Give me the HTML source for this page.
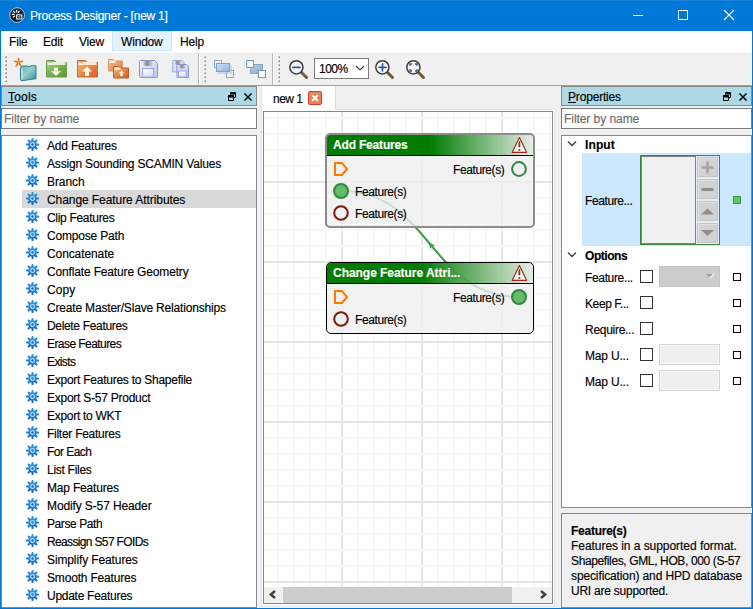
<!DOCTYPE html>
<html><head><meta charset="utf-8">
<style>
*{box-sizing:border-box;margin:0;padding:0}
html,body{width:753px;height:609px;overflow:hidden;background:#f0f0f0;font-family:"Liberation Sans",sans-serif;font-size:12px;letter-spacing:-0.18px;color:#000;-webkit-text-stroke:0.15px currentColor}
.a{position:absolute}
#title{left:0;top:0;width:753px;height:31px;background:#0078d7}
#title .t{left:30px;top:9px;color:#fff;font-size:12px;letter-spacing:-0.25px;white-space:nowrap}
#lb{left:0;top:0;width:1px;height:609px;background:#0078d7;z-index:50}
#rb{left:752px;top:0;width:1px;height:609px;background:#0078d7;z-index:50}
#bb{left:0;top:608px;width:753px;height:1px;background:#0078d7;z-index:50}
#menu{left:0;top:31px;width:753px;height:21px;background:#fff}
.mi{position:absolute;top:4px;white-space:nowrap}
#mhl{left:112px;top:31px;width:60px;height:20px;background:#e5f3ff;border:1px solid #cce8ff}
#tb{left:0;top:52px;width:753px;height:34px;background:#f0f0f0;border-top:1px solid #f7f7f7;border-bottom:1px solid #a0a0a0}
.grip{position:absolute;width:2px;height:2px;background:linear-gradient(135deg,#d8d8d8 45%,#8c8c8c 55%);box-shadow:-1px -1px 0 #fafafa}
.sep{position:absolute;top:53px;width:1px;height:32px;background:#b4b4b4;box-shadow:1px 0 0 #fff}
.hdr{height:20px;background:#add8e6;border:1px solid #8a8a8a;white-space:nowrap}
.hdr .ht{position:absolute;left:6px;top:3px;font-size:12px}
.filt{height:21px;background:#fff;border:1px solid #7a7a7a}
.filt span{position:absolute;left:2px;top:3px;color:#6d6d6d;font-size:12px;letter-spacing:-0.06px}
#list{left:1px;top:135px;width:256px;height:473px;background:#fff;border:1px solid #828790;overflow:hidden}
.row{position:absolute;left:0;width:255px;height:18px}
.row.sel{background:transparent}
.row .gear{position:absolute;left:23.9px;top:1.3px}
.row .lt{position:absolute;left:46px;top:3px;white-space:nowrap}
#selbg{left:22px;top:190px;width:234px;height:18px;background:#d9d9d9}
#canvas{left:263px;top:111px;width:290px;height:493px;background:#fff;border:1px solid #828790;overflow:hidden}
.gv{position:absolute;top:112px;width:2px;height:475px;background:#f7f7f7}
.gh{position:absolute;left:264px;width:288px;height:2px;background:#f7f7f7}
.node{position:absolute;border-radius:5px;overflow:hidden}
.nh{position:absolute;left:0;right:0;height:21px;color:#fff;font-weight:bold;font-size:12px;white-space:nowrap}
.pl{position:absolute;white-space:nowrap;font-size:12px;letter-spacing:-0.4px}
</style></head><body>
<svg width="0" height="0" style="position:absolute"><defs><linearGradient id="gearg" x1="0" y1="0" x2="0" y2="1"><stop offset="0" stop-color="#2a94e2"/><stop offset="1" stop-color="#0b66c6"/></linearGradient></defs></svg><div id="lb" class="a"></div><div id="rb" class="a"></div><div id="bb" class="a"></div>

<!-- title bar -->
<div id="title" class="a"><div class="a" style="left:0;top:0;width:753px;height:1px;background:#1c84da"></div>
  <svg class="a" style="left:8px;top:6px" width="18" height="18" viewBox="0 0 18 18">
    <defs><linearGradient id="ic" x1="0" y1="0" x2="0" y2="1"><stop offset="0" stop-color="#24344e"/><stop offset="1" stop-color="#0a1628"/></linearGradient></defs>
    <circle cx="9.1" cy="9.05" r="7.4" fill="url(#ic)" stroke="#b4cce6" stroke-width="0.9"/>
    <rect x="8.6" y="8.9" width="5.2" height="4.1" fill="none" stroke="#e4e8ee" stroke-width="1.1"/>
    <rect x="9.9" y="10.4" width="2.3" height="1" fill="#d8dce4"/>
    <g stroke="#f4f6f8" stroke-width="1.3" stroke-linecap="round"><path d="M8.6 4.3v1.4M11 5.5l-0.8 0.8M5.7 5.5l0.9 0.9M4.5 8.4h1.5M5.5 10.8l1-0.6"/></g>
  </svg>
  <span class="a t">Process Designer - [new 1]</span>
  <div class="a" style="left:633px;top:15px;width:10px;height:1px;background:#fff"></div>
  <div class="a" style="left:678px;top:10px;width:10px;height:10px;border:1px solid #fff"></div>
  <svg class="a" style="left:723px;top:9px" width="12" height="12" viewBox="0 0 12 12"><path d="M1 1L11 11M11 1L1 11" stroke="#fff" stroke-width="1.1"/></svg>
</div>

<!-- menu -->
<div id="menu" class="a"></div>
<div id="mhl" class="a"></div>
<div class="a" style="left:0;top:31px;width:753px;height:21px">
  <span class="mi" style="left:9px">File</span>
  <span class="mi" style="left:43px">Edit</span>
  <span class="mi" style="left:79px">View</span>
  <span class="mi" style="left:121px">Window</span>
  <span class="mi" style="left:180px">Help</span>
</div>

<!-- toolbar -->
<div id="tb" class="a"></div>
<div class="a" style="left:0;top:52px;width:753px;height:1px;background:#f8f8f8"></div>
<!-- grips -->
<div class="a" style="left:5px;top:56px"><div class="grip" style="top:0"></div><div class="grip" style="top:4px"></div><div class="grip" style="top:8px"></div><div class="grip" style="top:12px"></div><div class="grip" style="top:16px"></div><div class="grip" style="top:20px"></div><div class="grip" style="top:24px"></div></div>
<div class="a" style="left:204px;top:56px"><div class="grip" style="top:0"></div><div class="grip" style="top:4px"></div><div class="grip" style="top:8px"></div><div class="grip" style="top:12px"></div><div class="grip" style="top:16px"></div><div class="grip" style="top:20px"></div><div class="grip" style="top:24px"></div></div>
<div class="a" style="left:278px;top:56px"><div class="grip" style="top:0"></div><div class="grip" style="top:4px"></div><div class="grip" style="top:8px"></div><div class="grip" style="top:12px"></div><div class="grip" style="top:16px"></div><div class="grip" style="top:20px"></div><div class="grip" style="top:24px"></div></div>
<div class="sep" style="left:198px"></div>
<div class="sep" style="left:272px"></div>
<!-- new -->
<svg class="a" style="left:12px;top:56px" width="26" height="26" viewBox="0 0 26 26">
  <defs><linearGradient id="gt" x1="0" y1="0" x2="1" y2="1"><stop offset="0" stop-color="#5fb0b0"/><stop offset="0.45" stop-color="#94d0c8"/><stop offset="1" stop-color="#2e8e98"/></linearGradient></defs>
  <path d="M8.5 11.5 l2-1.5 h5 l1 0.7 l3-1 h4.5 v13 l-14 2 q-1.5 0 -1.5 -1.5z" fill="url(#gt)" stroke="#2a8490" stroke-width="1"/>
  <path d="M10 12.5 v10" stroke="#e0f0f8" stroke-width="1.2"/>
  <g stroke="#e8742a" stroke-width="1.7" stroke-linecap="round"><path d="M6.5 6.5L6.50 2.50M6.5 6.5L10.30 5.26M6.5 6.5L8.85 9.74M6.5 6.5L4.15 9.74M6.5 6.5L2.70 5.26"/></g>
  <circle cx="6.5" cy="6.5" r="0.9" fill="#f0c020"/>
</svg>
<!-- open (green) -->
<svg class="a" style="left:45px;top:59px" width="23" height="20" viewBox="0 0 23 20">
  <defs><linearGradient id="gg" x1="0" y1="0" x2="1" y2="1"><stop offset="0" stop-color="#b4d49a"/><stop offset="0.5" stop-color="#7cb052"/><stop offset="1" stop-color="#5a9a30"/></linearGradient>
  <linearGradient id="go" x1="0" y1="0" x2="1" y2="1"><stop offset="0" stop-color="#f4c080"/><stop offset="0.5" stop-color="#e88a48"/><stop offset="1" stop-color="#d05a28"/></linearGradient></defs>
  <path d="M1.5 1.5 h8 l2 2 h10 v14.5 h-20z" fill="url(#gg)" stroke="#6a9a48" stroke-width="1"/>
  <rect x="2.5" y="3" width="18" height="3" fill="#f6faf0" opacity="0.85"/>
  <rect x="3" y="2.2" width="5" height="1.2" fill="#8ab86a"/>
  <path d="M9 8.5h4v3.5h3l-5 5l-5-5h3z" fill="#f2f8ea"/>
</svg>
<!-- orange folder up -->
<svg class="a" style="left:76px;top:59px" width="23" height="20" viewBox="0 0 23 20">
  <path d="M1.5 1.5 h8 l2 2 h10 v14.5 h-20z" fill="url(#go)" stroke="#c86a38" stroke-width="1"/>
  <rect x="2.5" y="3" width="18" height="3" fill="#fff6ec" opacity="0.85"/>
  <rect x="3" y="2.2" width="5" height="1.2" fill="#e8902a"/>
  <path d="M11 7.5l5 5h-3v4.5h-4v-4.5h-3z" fill="#fff6ee"/>
</svg>
<!-- double orange -->
<svg class="a" style="left:107px;top:58px" width="23" height="21" viewBox="0 0 23 21">
  <path d="M1.5 1.5 h5 l1.5 1.5 h7.5 v10 h-14z" fill="url(#go)" stroke="#d08050" stroke-width="1" opacity="0.8"/>
  <rect x="2.5" y="2.5" width="6" height="2.5" fill="#fff4e8" opacity="0.85"/>
  <path d="M6.5 8.5 h5 l1.5 1.5 h8.5 v10 h-15z" fill="url(#go)" stroke="#c05a20" stroke-width="1"/>
  <rect x="7.5" y="9.5" width="6" height="2.5" fill="#fff4e8" opacity="0.9"/>
  <path d="M14.5 12.5l2.8 2.8h-1.6v3h-2.4v-3h-1.6z" fill="#fff4ee"/>
</svg>
<!-- save -->
<svg class="a" style="left:138px;top:59px" width="21" height="20" viewBox="0 0 21 20">
  <defs>
   <linearGradient id="gsb" x1="0" y1="0" x2="1" y2="1"><stop offset="0" stop-color="#f4f6ff"/><stop offset="1" stop-color="#b8c6f0"/></linearGradient>
   <linearGradient id="gsh" x1="0" y1="0" x2="1" y2="0"><stop offset="0" stop-color="#e4e4e4"/><stop offset="0.45" stop-color="#888"/><stop offset="0.7" stop-color="#a8a8a8"/><stop offset="1" stop-color="#d8d8d8"/></linearGradient>
   <linearGradient id="gsl" x1="0" y1="0" x2="1" y2="1"><stop offset="0" stop-color="#ffffff"/><stop offset="1" stop-color="#d4dcf6"/></linearGradient>
  </defs>
  <path d="M2.5 1.5h14l3 3v13q0 1-1 1h-16q-1 0-1-1v-15q0-1 1-1z" fill="url(#gsb)" stroke="#8294d4" stroke-width="1"/>
  <rect x="4.5" y="2" width="10" height="5" fill="url(#gsh)"/>
  <rect x="4.5" y="9.5" width="11" height="8.5" fill="url(#gsl)" stroke="#9aaae0" stroke-width="1"/>
</svg>
<!-- save all -->
<svg class="a" style="left:171px;top:59px" width="20" height="20" viewBox="0 0 20 20">
  <path d="M2 1.5h9l2 2v9.5h-11.5z" fill="url(#gsb)" stroke="#9aa8dc" stroke-width="1"/>
  <rect x="3.5" y="2" width="6.5" height="3.5" fill="url(#gsh)"/>
  <path d="M6 5.5h9.5l2 2v11h-11.5z" fill="url(#gsb)" stroke="#8294d4" stroke-width="1"/>
  <rect x="7.5" y="6" width="7" height="3.5" fill="url(#gsh)"/>
  <rect x="7.5" y="12" width="8" height="6" fill="url(#gsl)" stroke="#9aaae0" stroke-width="1"/>
</svg>
<!-- overlap icons -->
<svg class="a" style="left:213px;top:59px" width="22" height="20" viewBox="0 0 22 20">
  <defs><linearGradient id="gov" x1="0" y1="0" x2="1" y2="1"><stop offset="0" stop-color="#cfe0f6"/><stop offset="1" stop-color="#8eb2e0"/></linearGradient>
  <linearGradient id="gov2" x1="0" y1="0" x2="1" y2="1"><stop offset="0" stop-color="#c0cee0"/><stop offset="1" stop-color="#8ea6c6"/></linearGradient></defs>
  <rect x="1.5" y="1.5" width="7" height="7" fill="#f6f8fa" stroke="#8aaac8" stroke-width="1"/>
  <rect x="13.5" y="11.5" width="7" height="7" fill="#f2f2f2" stroke="#8aaac8" stroke-width="1"/>
  <rect x="5" y="6" width="14" height="9" fill="#b8c8dc" opacity="0.6"/>
  <rect x="3.5" y="4.5" width="13" height="8" fill="url(#gov)" stroke="#7ca2d0" stroke-width="1"/>
</svg>
<svg class="a" style="left:245px;top:59px" width="22" height="20" viewBox="0 0 22 20">
  <rect x="5.5" y="5.5" width="12" height="9" fill="url(#gov2)" stroke="#8aa6c6" stroke-width="1"/>
  <rect x="1.5" y="1.5" width="7" height="7" fill="#fdfdfd" stroke="#6e9cc4" stroke-width="1"/>
  <rect x="13.5" y="11.5" width="7" height="7" fill="#fdfdfd" stroke="#6e9cc4" stroke-width="1"/>
</svg>
<!-- zoom out -->
<svg class="a" style="left:288px;top:59px" width="21" height="21" viewBox="0 0 21 21">
  <path d="M13 13l5.5 5.5" stroke="#6e5c38" stroke-width="3" stroke-linecap="round"/>
  <circle cx="8.4" cy="8.3" r="6.6" fill="#f8f8f8" stroke="#3c3c3c" stroke-width="1.5"/>
  <path d="M5 8.3h7" stroke="#2a54a0" stroke-width="1.7" stroke-linecap="round"/>
</svg>
<div class="a" style="left:314px;top:58px;width:55px;height:21px;background:#fff;border:1px solid #7a7a7a"></div>
<span class="a" style="left:319px;top:62px;font-size:12px;letter-spacing:-0.5px">100%</span>
<svg class="a" style="left:355px;top:64px" width="10" height="8" viewBox="0 0 10 8"><path d="M1 2l4 4l4-4" fill="none" stroke="#404040" stroke-width="1.1"/></svg>
<!-- zoom in -->
<svg class="a" style="left:374px;top:59px" width="21" height="21" viewBox="0 0 21 21">
  <path d="M13 13l5.5 5.5" stroke="#6e5c38" stroke-width="3" stroke-linecap="round"/>
  <circle cx="8.4" cy="8.3" r="6.6" fill="#f8f8f8" stroke="#3c3c3c" stroke-width="1.5"/>
  <path d="M5 8.3h7M8.5 4.8v7" stroke="#2a54a0" stroke-width="1.7" stroke-linecap="round"/>
</svg>
<!-- zoom fit -->
<svg class="a" style="left:405px;top:59px" width="21" height="21" viewBox="0 0 21 21">
  <path d="M13 13l5.5 5.5" stroke="#6e5c38" stroke-width="3" stroke-linecap="round"/>
  <circle cx="8.4" cy="8.3" r="6.6" fill="#f8f8f8" stroke="#3c3c3c" stroke-width="1.5"/>
  <path d="M5 7v-2h2M10 5h2v2M12 10v2h-2M7 12h-2v-2" fill="none" stroke="#2a54a0" stroke-width="1.3"/>
</svg>


<!-- left panel -->
<div class="a hdr" style="left:1px;top:86px;width:256px"><span class="ht" style="letter-spacing:0.2px"><u>T</u>ools</span>
  <svg class="a" style="left:226px;top:5px" width="10" height="10" viewBox="0 0 10 10"><path d="M2.5 3v-2.5h5v5h-1.5" fill="none" stroke="#000" stroke-width="1"/><path d="M2 1.5h6" stroke="#000" stroke-width="2"/><path d="M0.5 3.5h5v5h-5z" fill="none" stroke="#000" stroke-width="1"/><path d="M0 4.5h6" stroke="#000" stroke-width="2"/></svg>
  <svg class="a" style="left:241px;top:5px" width="10" height="10" viewBox="0 0 10 10"><path d="M1.5 1.5L8.5 8.5M8.5 1.5L1.5 8.5" stroke="#000" stroke-width="1.5"/></svg>
</div>
<div class="a filt" style="left:1px;top:108px;width:256px"><span>Filter by name</span></div>
<div id="list" class="a"></div>
<div id="selbg" class="a"></div>
<div class="a" style="left:1px;top:0;width:256px;height:609px">
<div class="row" style="top:136px"><svg class="gear" width="15" height="15" viewBox="-7.5 -7.5 15 15"><path d="M1.35 -3.00 L0.75 -6.50 L-0.75 -6.50 L-1.35 -3.00ZM3.08 -1.17 L5.13 -4.07 L4.07 -5.13 L1.17 -3.08ZM3.00 1.35 L6.50 0.75 L6.50 -0.75 L3.00 -1.35ZM1.17 3.08 L4.07 5.13 L5.13 4.07 L3.08 1.17ZM-1.35 3.00 L-0.75 6.50 L0.75 6.50 L1.35 3.00ZM-3.08 1.17 L-5.13 4.07 L-4.07 5.13 L-1.17 3.08ZM-3.00 -1.35 L-6.50 -0.75 L-6.50 0.75 L-3.00 1.35ZM-1.17 -3.08 L-4.07 -5.13 L-5.13 -4.07 L-3.08 -1.17Z" fill="url(#gearg)"/><circle r="4.0" fill="url(#gearg)"/><circle r="2.9" fill="#3c9ae6"/><circle r="2.0" fill="none" stroke="#d8eefc" stroke-width="0.9"/><circle r="1.0" fill="#1e7cd4"/></svg><span class="lt" style="letter-spacing:-0.180px">Add Features</span></div>
<div class="row" style="top:154px"><svg class="gear" width="15" height="15" viewBox="-7.5 -7.5 15 15"><path d="M1.35 -3.00 L0.75 -6.50 L-0.75 -6.50 L-1.35 -3.00ZM3.08 -1.17 L5.13 -4.07 L4.07 -5.13 L1.17 -3.08ZM3.00 1.35 L6.50 0.75 L6.50 -0.75 L3.00 -1.35ZM1.17 3.08 L4.07 5.13 L5.13 4.07 L3.08 1.17ZM-1.35 3.00 L-0.75 6.50 L0.75 6.50 L1.35 3.00ZM-3.08 1.17 L-5.13 4.07 L-4.07 5.13 L-1.17 3.08ZM-3.00 -1.35 L-6.50 -0.75 L-6.50 0.75 L-3.00 1.35ZM-1.17 -3.08 L-4.07 -5.13 L-5.13 -4.07 L-3.08 -1.17Z" fill="url(#gearg)"/><circle r="4.0" fill="url(#gearg)"/><circle r="2.9" fill="#3c9ae6"/><circle r="2.0" fill="none" stroke="#d8eefc" stroke-width="0.9"/><circle r="1.0" fill="#1e7cd4"/></svg><span class="lt" style="letter-spacing:-0.180px">Assign Sounding SCAMIN Values</span></div>
<div class="row" style="top:172px"><svg class="gear" width="15" height="15" viewBox="-7.5 -7.5 15 15"><path d="M1.35 -3.00 L0.75 -6.50 L-0.75 -6.50 L-1.35 -3.00ZM3.08 -1.17 L5.13 -4.07 L4.07 -5.13 L1.17 -3.08ZM3.00 1.35 L6.50 0.75 L6.50 -0.75 L3.00 -1.35ZM1.17 3.08 L4.07 5.13 L5.13 4.07 L3.08 1.17ZM-1.35 3.00 L-0.75 6.50 L0.75 6.50 L1.35 3.00ZM-3.08 1.17 L-5.13 4.07 L-4.07 5.13 L-1.17 3.08ZM-3.00 -1.35 L-6.50 -0.75 L-6.50 0.75 L-3.00 1.35ZM-1.17 -3.08 L-4.07 -5.13 L-5.13 -4.07 L-3.08 -1.17Z" fill="url(#gearg)"/><circle r="4.0" fill="url(#gearg)"/><circle r="2.9" fill="#3c9ae6"/><circle r="2.0" fill="none" stroke="#d8eefc" stroke-width="0.9"/><circle r="1.0" fill="#1e7cd4"/></svg><span class="lt" style="letter-spacing:-0.080px">Branch</span></div>
<div class="row sel" style="top:190px"><svg class="gear" width="15" height="15" viewBox="-7.5 -7.5 15 15"><path d="M1.35 -3.00 L0.75 -6.50 L-0.75 -6.50 L-1.35 -3.00ZM3.08 -1.17 L5.13 -4.07 L4.07 -5.13 L1.17 -3.08ZM3.00 1.35 L6.50 0.75 L6.50 -0.75 L3.00 -1.35ZM1.17 3.08 L4.07 5.13 L5.13 4.07 L3.08 1.17ZM-1.35 3.00 L-0.75 6.50 L0.75 6.50 L1.35 3.00ZM-3.08 1.17 L-5.13 4.07 L-4.07 5.13 L-1.17 3.08ZM-3.00 -1.35 L-6.50 -0.75 L-6.50 0.75 L-3.00 1.35ZM-1.17 -3.08 L-4.07 -5.13 L-5.13 -4.07 L-3.08 -1.17Z" fill="url(#gearg)"/><circle r="4.0" fill="url(#gearg)"/><circle r="2.9" fill="#3c9ae6"/><circle r="2.0" fill="none" stroke="#d8eefc" stroke-width="0.9"/><circle r="1.0" fill="#1e7cd4"/></svg><span class="lt" style="letter-spacing:-0.072px">Change Feature Attributes</span></div>
<div class="row" style="top:208px"><svg class="gear" width="15" height="15" viewBox="-7.5 -7.5 15 15"><path d="M1.35 -3.00 L0.75 -6.50 L-0.75 -6.50 L-1.35 -3.00ZM3.08 -1.17 L5.13 -4.07 L4.07 -5.13 L1.17 -3.08ZM3.00 1.35 L6.50 0.75 L6.50 -0.75 L3.00 -1.35ZM1.17 3.08 L4.07 5.13 L5.13 4.07 L3.08 1.17ZM-1.35 3.00 L-0.75 6.50 L0.75 6.50 L1.35 3.00ZM-3.08 1.17 L-5.13 4.07 L-4.07 5.13 L-1.17 3.08ZM-3.00 -1.35 L-6.50 -0.75 L-6.50 0.75 L-3.00 1.35ZM-1.17 -3.08 L-4.07 -5.13 L-5.13 -4.07 L-3.08 -1.17Z" fill="url(#gearg)"/><circle r="4.0" fill="url(#gearg)"/><circle r="2.9" fill="#3c9ae6"/><circle r="2.0" fill="none" stroke="#d8eefc" stroke-width="0.9"/><circle r="1.0" fill="#1e7cd4"/></svg><span class="lt" style="letter-spacing:-0.305px">Clip Features</span></div>
<div class="row" style="top:226px"><svg class="gear" width="15" height="15" viewBox="-7.5 -7.5 15 15"><path d="M1.35 -3.00 L0.75 -6.50 L-0.75 -6.50 L-1.35 -3.00ZM3.08 -1.17 L5.13 -4.07 L4.07 -5.13 L1.17 -3.08ZM3.00 1.35 L6.50 0.75 L6.50 -0.75 L3.00 -1.35ZM1.17 3.08 L4.07 5.13 L5.13 4.07 L3.08 1.17ZM-1.35 3.00 L-0.75 6.50 L0.75 6.50 L1.35 3.00ZM-3.08 1.17 L-5.13 4.07 L-4.07 5.13 L-1.17 3.08ZM-3.00 -1.35 L-6.50 -0.75 L-6.50 0.75 L-3.00 1.35ZM-1.17 -3.08 L-4.07 -5.13 L-5.13 -4.07 L-3.08 -1.17Z" fill="url(#gearg)"/><circle r="4.0" fill="url(#gearg)"/><circle r="2.9" fill="#3c9ae6"/><circle r="2.0" fill="none" stroke="#d8eefc" stroke-width="0.9"/><circle r="1.0" fill="#1e7cd4"/></svg><span class="lt" style="letter-spacing:-0.180px">Compose Path</span></div>
<div class="row" style="top:244px"><svg class="gear" width="15" height="15" viewBox="-7.5 -7.5 15 15"><path d="M1.35 -3.00 L0.75 -6.50 L-0.75 -6.50 L-1.35 -3.00ZM3.08 -1.17 L5.13 -4.07 L4.07 -5.13 L1.17 -3.08ZM3.00 1.35 L6.50 0.75 L6.50 -0.75 L3.00 -1.35ZM1.17 3.08 L4.07 5.13 L5.13 4.07 L3.08 1.17ZM-1.35 3.00 L-0.75 6.50 L0.75 6.50 L1.35 3.00ZM-3.08 1.17 L-5.13 4.07 L-4.07 5.13 L-1.17 3.08ZM-3.00 -1.35 L-6.50 -0.75 L-6.50 0.75 L-3.00 1.35ZM-1.17 -3.08 L-4.07 -5.13 L-5.13 -4.07 L-3.08 -1.17Z" fill="url(#gearg)"/><circle r="4.0" fill="url(#gearg)"/><circle r="2.9" fill="#3c9ae6"/><circle r="2.0" fill="none" stroke="#d8eefc" stroke-width="0.9"/><circle r="1.0" fill="#1e7cd4"/></svg><span class="lt" style="letter-spacing:-0.100px">Concatenate</span></div>
<div class="row" style="top:262px"><svg class="gear" width="15" height="15" viewBox="-7.5 -7.5 15 15"><path d="M1.35 -3.00 L0.75 -6.50 L-0.75 -6.50 L-1.35 -3.00ZM3.08 -1.17 L5.13 -4.07 L4.07 -5.13 L1.17 -3.08ZM3.00 1.35 L6.50 0.75 L6.50 -0.75 L3.00 -1.35ZM1.17 3.08 L4.07 5.13 L5.13 4.07 L3.08 1.17ZM-1.35 3.00 L-0.75 6.50 L0.75 6.50 L1.35 3.00ZM-3.08 1.17 L-5.13 4.07 L-4.07 5.13 L-1.17 3.08ZM-3.00 -1.35 L-6.50 -0.75 L-6.50 0.75 L-3.00 1.35ZM-1.17 -3.08 L-4.07 -5.13 L-5.13 -4.07 L-3.08 -1.17Z" fill="url(#gearg)"/><circle r="4.0" fill="url(#gearg)"/><circle r="2.9" fill="#3c9ae6"/><circle r="2.0" fill="none" stroke="#d8eefc" stroke-width="0.9"/><circle r="1.0" fill="#1e7cd4"/></svg><span class="lt" style="letter-spacing:-0.155px">Conflate Feature Geometry</span></div>
<div class="row" style="top:280px"><svg class="gear" width="15" height="15" viewBox="-7.5 -7.5 15 15"><path d="M1.35 -3.00 L0.75 -6.50 L-0.75 -6.50 L-1.35 -3.00ZM3.08 -1.17 L5.13 -4.07 L4.07 -5.13 L1.17 -3.08ZM3.00 1.35 L6.50 0.75 L6.50 -0.75 L3.00 -1.35ZM1.17 3.08 L4.07 5.13 L5.13 4.07 L3.08 1.17ZM-1.35 3.00 L-0.75 6.50 L0.75 6.50 L1.35 3.00ZM-3.08 1.17 L-5.13 4.07 L-4.07 5.13 L-1.17 3.08ZM-3.00 -1.35 L-6.50 -0.75 L-6.50 0.75 L-3.00 1.35ZM-1.17 -3.08 L-4.07 -5.13 L-5.13 -4.07 L-3.08 -1.17Z" fill="url(#gearg)"/><circle r="4.0" fill="url(#gearg)"/><circle r="2.9" fill="#3c9ae6"/><circle r="2.0" fill="none" stroke="#d8eefc" stroke-width="0.9"/><circle r="1.0" fill="#1e7cd4"/></svg><span class="lt" style="letter-spacing:0.087px">Copy</span></div>
<div class="row" style="top:298px"><svg class="gear" width="15" height="15" viewBox="-7.5 -7.5 15 15"><path d="M1.35 -3.00 L0.75 -6.50 L-0.75 -6.50 L-1.35 -3.00ZM3.08 -1.17 L5.13 -4.07 L4.07 -5.13 L1.17 -3.08ZM3.00 1.35 L6.50 0.75 L6.50 -0.75 L3.00 -1.35ZM1.17 3.08 L4.07 5.13 L5.13 4.07 L3.08 1.17ZM-1.35 3.00 L-0.75 6.50 L0.75 6.50 L1.35 3.00ZM-3.08 1.17 L-5.13 4.07 L-4.07 5.13 L-1.17 3.08ZM-3.00 -1.35 L-6.50 -0.75 L-6.50 0.75 L-3.00 1.35ZM-1.17 -3.08 L-4.07 -5.13 L-5.13 -4.07 L-3.08 -1.17Z" fill="url(#gearg)"/><circle r="4.0" fill="url(#gearg)"/><circle r="2.9" fill="#3c9ae6"/><circle r="2.0" fill="none" stroke="#d8eefc" stroke-width="0.9"/><circle r="1.0" fill="#1e7cd4"/></svg><span class="lt" style="letter-spacing:-0.180px">Create Master/Slave Relationships</span></div>
<div class="row" style="top:316px"><svg class="gear" width="15" height="15" viewBox="-7.5 -7.5 15 15"><path d="M1.35 -3.00 L0.75 -6.50 L-0.75 -6.50 L-1.35 -3.00ZM3.08 -1.17 L5.13 -4.07 L4.07 -5.13 L1.17 -3.08ZM3.00 1.35 L6.50 0.75 L6.50 -0.75 L3.00 -1.35ZM1.17 3.08 L4.07 5.13 L5.13 4.07 L3.08 1.17ZM-1.35 3.00 L-0.75 6.50 L0.75 6.50 L1.35 3.00ZM-3.08 1.17 L-5.13 4.07 L-4.07 5.13 L-1.17 3.08ZM-3.00 -1.35 L-6.50 -0.75 L-6.50 0.75 L-3.00 1.35ZM-1.17 -3.08 L-4.07 -5.13 L-5.13 -4.07 L-3.08 -1.17Z" fill="url(#gearg)"/><circle r="4.0" fill="url(#gearg)"/><circle r="2.9" fill="#3c9ae6"/><circle r="2.0" fill="none" stroke="#d8eefc" stroke-width="0.9"/><circle r="1.0" fill="#1e7cd4"/></svg><span class="lt" style="letter-spacing:-0.330px">Delete Features</span></div>
<div class="row" style="top:334px"><svg class="gear" width="15" height="15" viewBox="-7.5 -7.5 15 15"><path d="M1.35 -3.00 L0.75 -6.50 L-0.75 -6.50 L-1.35 -3.00ZM3.08 -1.17 L5.13 -4.07 L4.07 -5.13 L1.17 -3.08ZM3.00 1.35 L6.50 0.75 L6.50 -0.75 L3.00 -1.35ZM1.17 3.08 L4.07 5.13 L5.13 4.07 L3.08 1.17ZM-1.35 3.00 L-0.75 6.50 L0.75 6.50 L1.35 3.00ZM-3.08 1.17 L-5.13 4.07 L-4.07 5.13 L-1.17 3.08ZM-3.00 -1.35 L-6.50 -0.75 L-6.50 0.75 L-3.00 1.35ZM-1.17 -3.08 L-4.07 -5.13 L-5.13 -4.07 L-3.08 -1.17Z" fill="url(#gearg)"/><circle r="4.0" fill="url(#gearg)"/><circle r="2.9" fill="#3c9ae6"/><circle r="2.0" fill="none" stroke="#d8eefc" stroke-width="0.9"/><circle r="1.0" fill="#1e7cd4"/></svg><span class="lt" style="letter-spacing:-0.565px">Erase Features</span></div>
<div class="row" style="top:352px"><svg class="gear" width="15" height="15" viewBox="-7.5 -7.5 15 15"><path d="M1.35 -3.00 L0.75 -6.50 L-0.75 -6.50 L-1.35 -3.00ZM3.08 -1.17 L5.13 -4.07 L4.07 -5.13 L1.17 -3.08ZM3.00 1.35 L6.50 0.75 L6.50 -0.75 L3.00 -1.35ZM1.17 3.08 L4.07 5.13 L5.13 4.07 L3.08 1.17ZM-1.35 3.00 L-0.75 6.50 L0.75 6.50 L1.35 3.00ZM-3.08 1.17 L-5.13 4.07 L-4.07 5.13 L-1.17 3.08ZM-3.00 -1.35 L-6.50 -0.75 L-6.50 0.75 L-3.00 1.35ZM-1.17 -3.08 L-4.07 -5.13 L-5.13 -4.07 L-3.08 -1.17Z" fill="url(#gearg)"/><circle r="4.0" fill="url(#gearg)"/><circle r="2.9" fill="#3c9ae6"/><circle r="2.0" fill="none" stroke="#d8eefc" stroke-width="0.9"/><circle r="1.0" fill="#1e7cd4"/></svg><span class="lt" style="letter-spacing:-0.620px">Exists</span></div>
<div class="row" style="top:370px"><svg class="gear" width="15" height="15" viewBox="-7.5 -7.5 15 15"><path d="M1.35 -3.00 L0.75 -6.50 L-0.75 -6.50 L-1.35 -3.00ZM3.08 -1.17 L5.13 -4.07 L4.07 -5.13 L1.17 -3.08ZM3.00 1.35 L6.50 0.75 L6.50 -0.75 L3.00 -1.35ZM1.17 3.08 L4.07 5.13 L5.13 4.07 L3.08 1.17ZM-1.35 3.00 L-0.75 6.50 L0.75 6.50 L1.35 3.00ZM-3.08 1.17 L-5.13 4.07 L-4.07 5.13 L-1.17 3.08ZM-3.00 -1.35 L-6.50 -0.75 L-6.50 0.75 L-3.00 1.35ZM-1.17 -3.08 L-4.07 -5.13 L-5.13 -4.07 L-3.08 -1.17Z" fill="url(#gearg)"/><circle r="4.0" fill="url(#gearg)"/><circle r="2.9" fill="#3c9ae6"/><circle r="2.0" fill="none" stroke="#d8eefc" stroke-width="0.9"/><circle r="1.0" fill="#1e7cd4"/></svg><span class="lt" style="letter-spacing:-0.254px">Export Features to Shapefile</span></div>
<div class="row" style="top:388px"><svg class="gear" width="15" height="15" viewBox="-7.5 -7.5 15 15"><path d="M1.35 -3.00 L0.75 -6.50 L-0.75 -6.50 L-1.35 -3.00ZM3.08 -1.17 L5.13 -4.07 L4.07 -5.13 L1.17 -3.08ZM3.00 1.35 L6.50 0.75 L6.50 -0.75 L3.00 -1.35ZM1.17 3.08 L4.07 5.13 L5.13 4.07 L3.08 1.17ZM-1.35 3.00 L-0.75 6.50 L0.75 6.50 L1.35 3.00ZM-3.08 1.17 L-5.13 4.07 L-4.07 5.13 L-1.17 3.08ZM-3.00 -1.35 L-6.50 -0.75 L-6.50 0.75 L-3.00 1.35ZM-1.17 -3.08 L-4.07 -5.13 L-5.13 -4.07 L-3.08 -1.17Z" fill="url(#gearg)"/><circle r="4.0" fill="url(#gearg)"/><circle r="2.9" fill="#3c9ae6"/><circle r="2.0" fill="none" stroke="#d8eefc" stroke-width="0.9"/><circle r="1.0" fill="#1e7cd4"/></svg><span class="lt" style="letter-spacing:-0.247px">Export S-57 Product</span></div>
<div class="row" style="top:406px"><svg class="gear" width="15" height="15" viewBox="-7.5 -7.5 15 15"><path d="M1.35 -3.00 L0.75 -6.50 L-0.75 -6.50 L-1.35 -3.00ZM3.08 -1.17 L5.13 -4.07 L4.07 -5.13 L1.17 -3.08ZM3.00 1.35 L6.50 0.75 L6.50 -0.75 L3.00 -1.35ZM1.17 3.08 L4.07 5.13 L5.13 4.07 L3.08 1.17ZM-1.35 3.00 L-0.75 6.50 L0.75 6.50 L1.35 3.00ZM-3.08 1.17 L-5.13 4.07 L-4.07 5.13 L-1.17 3.08ZM-3.00 -1.35 L-6.50 -0.75 L-6.50 0.75 L-3.00 1.35ZM-1.17 -3.08 L-4.07 -5.13 L-5.13 -4.07 L-3.08 -1.17Z" fill="url(#gearg)"/><circle r="4.0" fill="url(#gearg)"/><circle r="2.9" fill="#3c9ae6"/><circle r="2.0" fill="none" stroke="#d8eefc" stroke-width="0.9"/><circle r="1.0" fill="#1e7cd4"/></svg><span class="lt" style="letter-spacing:-0.288px">Export to WKT</span></div>
<div class="row" style="top:424px"><svg class="gear" width="15" height="15" viewBox="-7.5 -7.5 15 15"><path d="M1.35 -3.00 L0.75 -6.50 L-0.75 -6.50 L-1.35 -3.00ZM3.08 -1.17 L5.13 -4.07 L4.07 -5.13 L1.17 -3.08ZM3.00 1.35 L6.50 0.75 L6.50 -0.75 L3.00 -1.35ZM1.17 3.08 L4.07 5.13 L5.13 4.07 L3.08 1.17ZM-1.35 3.00 L-0.75 6.50 L0.75 6.50 L1.35 3.00ZM-3.08 1.17 L-5.13 4.07 L-4.07 5.13 L-1.17 3.08ZM-3.00 -1.35 L-6.50 -0.75 L-6.50 0.75 L-3.00 1.35ZM-1.17 -3.08 L-4.07 -5.13 L-5.13 -4.07 L-3.08 -1.17Z" fill="url(#gearg)"/><circle r="4.0" fill="url(#gearg)"/><circle r="2.9" fill="#3c9ae6"/><circle r="2.0" fill="none" stroke="#d8eefc" stroke-width="0.9"/><circle r="1.0" fill="#1e7cd4"/></svg><span class="lt" style="letter-spacing:-0.266px">Filter Features</span></div>
<div class="row" style="top:442px"><svg class="gear" width="15" height="15" viewBox="-7.5 -7.5 15 15"><path d="M1.35 -3.00 L0.75 -6.50 L-0.75 -6.50 L-1.35 -3.00ZM3.08 -1.17 L5.13 -4.07 L4.07 -5.13 L1.17 -3.08ZM3.00 1.35 L6.50 0.75 L6.50 -0.75 L3.00 -1.35ZM1.17 3.08 L4.07 5.13 L5.13 4.07 L3.08 1.17ZM-1.35 3.00 L-0.75 6.50 L0.75 6.50 L1.35 3.00ZM-3.08 1.17 L-5.13 4.07 L-4.07 5.13 L-1.17 3.08ZM-3.00 -1.35 L-6.50 -0.75 L-6.50 0.75 L-3.00 1.35ZM-1.17 -3.08 L-4.07 -5.13 L-5.13 -4.07 L-3.08 -1.17Z" fill="url(#gearg)"/><circle r="4.0" fill="url(#gearg)"/><circle r="2.9" fill="#3c9ae6"/><circle r="2.0" fill="none" stroke="#d8eefc" stroke-width="0.9"/><circle r="1.0" fill="#1e7cd4"/></svg><span class="lt" style="letter-spacing:-0.523px">For Each</span></div>
<div class="row" style="top:460px"><svg class="gear" width="15" height="15" viewBox="-7.5 -7.5 15 15"><path d="M1.35 -3.00 L0.75 -6.50 L-0.75 -6.50 L-1.35 -3.00ZM3.08 -1.17 L5.13 -4.07 L4.07 -5.13 L1.17 -3.08ZM3.00 1.35 L6.50 0.75 L6.50 -0.75 L3.00 -1.35ZM1.17 3.08 L4.07 5.13 L5.13 4.07 L3.08 1.17ZM-1.35 3.00 L-0.75 6.50 L0.75 6.50 L1.35 3.00ZM-3.08 1.17 L-5.13 4.07 L-4.07 5.13 L-1.17 3.08ZM-3.00 -1.35 L-6.50 -0.75 L-6.50 0.75 L-3.00 1.35ZM-1.17 -3.08 L-4.07 -5.13 L-5.13 -4.07 L-3.08 -1.17Z" fill="url(#gearg)"/><circle r="4.0" fill="url(#gearg)"/><circle r="2.9" fill="#3c9ae6"/><circle r="2.0" fill="none" stroke="#d8eefc" stroke-width="0.9"/><circle r="1.0" fill="#1e7cd4"/></svg><span class="lt" style="letter-spacing:-0.280px">List Files</span></div>
<div class="row" style="top:478px"><svg class="gear" width="15" height="15" viewBox="-7.5 -7.5 15 15"><path d="M1.35 -3.00 L0.75 -6.50 L-0.75 -6.50 L-1.35 -3.00ZM3.08 -1.17 L5.13 -4.07 L4.07 -5.13 L1.17 -3.08ZM3.00 1.35 L6.50 0.75 L6.50 -0.75 L3.00 -1.35ZM1.17 3.08 L4.07 5.13 L5.13 4.07 L3.08 1.17ZM-1.35 3.00 L-0.75 6.50 L0.75 6.50 L1.35 3.00ZM-3.08 1.17 L-5.13 4.07 L-4.07 5.13 L-1.17 3.08ZM-3.00 -1.35 L-6.50 -0.75 L-6.50 0.75 L-3.00 1.35ZM-1.17 -3.08 L-4.07 -5.13 L-5.13 -4.07 L-3.08 -1.17Z" fill="url(#gearg)"/><circle r="4.0" fill="url(#gearg)"/><circle r="2.9" fill="#3c9ae6"/><circle r="2.0" fill="none" stroke="#d8eefc" stroke-width="0.9"/><circle r="1.0" fill="#1e7cd4"/></svg><span class="lt" style="letter-spacing:-0.180px">Map Features</span></div>
<div class="row" style="top:496px"><svg class="gear" width="15" height="15" viewBox="-7.5 -7.5 15 15"><path d="M1.35 -3.00 L0.75 -6.50 L-0.75 -6.50 L-1.35 -3.00ZM3.08 -1.17 L5.13 -4.07 L4.07 -5.13 L1.17 -3.08ZM3.00 1.35 L6.50 0.75 L6.50 -0.75 L3.00 -1.35ZM1.17 3.08 L4.07 5.13 L5.13 4.07 L3.08 1.17ZM-1.35 3.00 L-0.75 6.50 L0.75 6.50 L1.35 3.00ZM-3.08 1.17 L-5.13 4.07 L-4.07 5.13 L-1.17 3.08ZM-3.00 -1.35 L-6.50 -0.75 L-6.50 0.75 L-3.00 1.35ZM-1.17 -3.08 L-4.07 -5.13 L-5.13 -4.07 L-3.08 -1.17Z" fill="url(#gearg)"/><circle r="4.0" fill="url(#gearg)"/><circle r="2.9" fill="#3c9ae6"/><circle r="2.0" fill="none" stroke="#d8eefc" stroke-width="0.9"/><circle r="1.0" fill="#1e7cd4"/></svg><span class="lt" style="letter-spacing:-0.121px">Modify S-57 Header</span></div>
<div class="row" style="top:514px"><svg class="gear" width="15" height="15" viewBox="-7.5 -7.5 15 15"><path d="M1.35 -3.00 L0.75 -6.50 L-0.75 -6.50 L-1.35 -3.00ZM3.08 -1.17 L5.13 -4.07 L4.07 -5.13 L1.17 -3.08ZM3.00 1.35 L6.50 0.75 L6.50 -0.75 L3.00 -1.35ZM1.17 3.08 L4.07 5.13 L5.13 4.07 L3.08 1.17ZM-1.35 3.00 L-0.75 6.50 L0.75 6.50 L1.35 3.00ZM-3.08 1.17 L-5.13 4.07 L-4.07 5.13 L-1.17 3.08ZM-3.00 -1.35 L-6.50 -0.75 L-6.50 0.75 L-3.00 1.35ZM-1.17 -3.08 L-4.07 -5.13 L-5.13 -4.07 L-3.08 -1.17Z" fill="url(#gearg)"/><circle r="4.0" fill="url(#gearg)"/><circle r="2.9" fill="#3c9ae6"/><circle r="2.0" fill="none" stroke="#d8eefc" stroke-width="0.9"/><circle r="1.0" fill="#1e7cd4"/></svg><span class="lt" style="letter-spacing:-0.424px">Parse Path</span></div>
<div class="row" style="top:532px"><svg class="gear" width="15" height="15" viewBox="-7.5 -7.5 15 15"><path d="M1.35 -3.00 L0.75 -6.50 L-0.75 -6.50 L-1.35 -3.00ZM3.08 -1.17 L5.13 -4.07 L4.07 -5.13 L1.17 -3.08ZM3.00 1.35 L6.50 0.75 L6.50 -0.75 L3.00 -1.35ZM1.17 3.08 L4.07 5.13 L5.13 4.07 L3.08 1.17ZM-1.35 3.00 L-0.75 6.50 L0.75 6.50 L1.35 3.00ZM-3.08 1.17 L-5.13 4.07 L-4.07 5.13 L-1.17 3.08ZM-3.00 -1.35 L-6.50 -0.75 L-6.50 0.75 L-3.00 1.35ZM-1.17 -3.08 L-4.07 -5.13 L-5.13 -4.07 L-3.08 -1.17Z" fill="url(#gearg)"/><circle r="4.0" fill="url(#gearg)"/><circle r="2.9" fill="#3c9ae6"/><circle r="2.0" fill="none" stroke="#d8eefc" stroke-width="0.9"/><circle r="1.0" fill="#1e7cd4"/></svg><span class="lt" style="letter-spacing:-0.651px">Reassign S57 FOIDs</span></div>
<div class="row" style="top:550px"><svg class="gear" width="15" height="15" viewBox="-7.5 -7.5 15 15"><path d="M1.35 -3.00 L0.75 -6.50 L-0.75 -6.50 L-1.35 -3.00ZM3.08 -1.17 L5.13 -4.07 L4.07 -5.13 L1.17 -3.08ZM3.00 1.35 L6.50 0.75 L6.50 -0.75 L3.00 -1.35ZM1.17 3.08 L4.07 5.13 L5.13 4.07 L3.08 1.17ZM-1.35 3.00 L-0.75 6.50 L0.75 6.50 L1.35 3.00ZM-3.08 1.17 L-5.13 4.07 L-4.07 5.13 L-1.17 3.08ZM-3.00 -1.35 L-6.50 -0.75 L-6.50 0.75 L-3.00 1.35ZM-1.17 -3.08 L-4.07 -5.13 L-5.13 -4.07 L-3.08 -1.17Z" fill="url(#gearg)"/><circle r="4.0" fill="url(#gearg)"/><circle r="2.9" fill="#3c9ae6"/><circle r="2.0" fill="none" stroke="#d8eefc" stroke-width="0.9"/><circle r="1.0" fill="#1e7cd4"/></svg><span class="lt" style="letter-spacing:-0.117px">Simplify Features</span></div>
<div class="row" style="top:568px"><svg class="gear" width="15" height="15" viewBox="-7.5 -7.5 15 15"><path d="M1.35 -3.00 L0.75 -6.50 L-0.75 -6.50 L-1.35 -3.00ZM3.08 -1.17 L5.13 -4.07 L4.07 -5.13 L1.17 -3.08ZM3.00 1.35 L6.50 0.75 L6.50 -0.75 L3.00 -1.35ZM1.17 3.08 L4.07 5.13 L5.13 4.07 L3.08 1.17ZM-1.35 3.00 L-0.75 6.50 L0.75 6.50 L1.35 3.00ZM-3.08 1.17 L-5.13 4.07 L-4.07 5.13 L-1.17 3.08ZM-3.00 -1.35 L-6.50 -0.75 L-6.50 0.75 L-3.00 1.35ZM-1.17 -3.08 L-4.07 -5.13 L-5.13 -4.07 L-3.08 -1.17Z" fill="url(#gearg)"/><circle r="4.0" fill="url(#gearg)"/><circle r="2.9" fill="#3c9ae6"/><circle r="2.0" fill="none" stroke="#d8eefc" stroke-width="0.9"/><circle r="1.0" fill="#1e7cd4"/></svg><span class="lt" style="letter-spacing:-0.180px">Smooth Features</span></div>
<div class="row" style="top:586px"><svg class="gear" width="15" height="15" viewBox="-7.5 -7.5 15 15"><path d="M1.35 -3.00 L0.75 -6.50 L-0.75 -6.50 L-1.35 -3.00ZM3.08 -1.17 L5.13 -4.07 L4.07 -5.13 L1.17 -3.08ZM3.00 1.35 L6.50 0.75 L6.50 -0.75 L3.00 -1.35ZM1.17 3.08 L4.07 5.13 L5.13 4.07 L3.08 1.17ZM-1.35 3.00 L-0.75 6.50 L0.75 6.50 L1.35 3.00ZM-3.08 1.17 L-5.13 4.07 L-4.07 5.13 L-1.17 3.08ZM-3.00 -1.35 L-6.50 -0.75 L-6.50 0.75 L-3.00 1.35ZM-1.17 -3.08 L-4.07 -5.13 L-5.13 -4.07 L-3.08 -1.17Z" fill="url(#gearg)"/><circle r="4.0" fill="url(#gearg)"/><circle r="2.9" fill="#3c9ae6"/><circle r="2.0" fill="none" stroke="#d8eefc" stroke-width="0.9"/><circle r="1.0" fill="#1e7cd4"/></svg><span class="lt" style="letter-spacing:-0.273px">Update Features</span></div>
</div>

<!-- tab strip -->
<div class="a" style="left:335px;top:86px;width:220px;height:24px;background:#f0f0f0;border-left:1px solid #dcdcdc;border-bottom:1px solid #e4e4e4"></div>
<div class="a" style="left:262px;top:86px;width:73px;height:25px;background:#fff"></div>
<span class="a" style="left:273px;top:92px;font-size:12px;letter-spacing:-0.5px">new 1</span>
<div class="a" style="left:308px;top:91px;width:14px;height:14px;background:#e8845c;border:1px solid #e03c28;border-radius:2px"></div>
<svg class="a" style="left:308px;top:91px" width="14" height="14" viewBox="0 0 14 14"><path d="M4.2 4.2L9.8 9.8M9.8 4.2L4.2 9.8" stroke="#fff" stroke-width="1.9"/></svg>
<div class="a" style="left:262px;top:110px;width:292px;height:495px;background:#fff"></div>
<div class="a" style="left:554px;top:110px;width:1px;height:496px;background:#e2e2e2"></div>
<div class="a" style="left:257px;top:86px;width:1px;height:522px;background:#f6f6f6"></div>
<div class="a" style="left:261px;top:86px;width:1px;height:522px;background:#e4e4e4"></div>

<!-- canvas -->
<div id="canvas" class="a"></div>
<div class="gv" style="left:277px"></div>
<div class="gv" style="left:293px"></div>
<div class="gv" style="left:309px"></div>
<div class="gv" style="left:325px"></div>
<div class="gv" style="left:341px;background:#e6e6e6"></div>
<div class="gv" style="left:357px"></div>
<div class="gv" style="left:373px"></div>
<div class="gv" style="left:389px"></div>
<div class="gv" style="left:405px"></div>
<div class="gv" style="left:421px;background:#e6e6e6"></div>
<div class="gv" style="left:437px"></div>
<div class="gv" style="left:453px"></div>
<div class="gv" style="left:469px"></div>
<div class="gv" style="left:485px"></div>
<div class="gv" style="left:501px;background:#e6e6e6"></div>
<div class="gv" style="left:517px"></div>
<div class="gv" style="left:533px"></div>
<div class="gv" style="left:549px"></div>
<div class="gh" style="top:117px"></div>
<div class="gh" style="top:133px"></div>
<div class="gh" style="top:149px"></div>
<div class="gh" style="top:165px"></div>
<div class="gh" style="top:181px;background:#e6e6e6"></div>
<div class="gh" style="top:197px"></div>
<div class="gh" style="top:213px"></div>
<div class="gh" style="top:229px"></div>
<div class="gh" style="top:245px"></div>
<div class="gh" style="top:261px;background:#e6e6e6"></div>
<div class="gh" style="top:277px"></div>
<div class="gh" style="top:293px"></div>
<div class="gh" style="top:309px"></div>
<div class="gh" style="top:325px"></div>
<div class="gh" style="top:341px;background:#e6e6e6"></div>
<div class="gh" style="top:357px"></div>
<div class="gh" style="top:373px"></div>
<div class="gh" style="top:389px"></div>
<div class="gh" style="top:405px"></div>
<div class="gh" style="top:421px;background:#e6e6e6"></div>
<div class="gh" style="top:437px"></div>
<div class="gh" style="top:453px"></div>
<div class="gh" style="top:469px"></div>
<div class="gh" style="top:485px"></div>
<div class="gh" style="top:501px;background:#e6e6e6"></div>
<div class="gh" style="top:517px"></div>
<div class="gh" style="top:533px"></div>
<div class="gh" style="top:549px"></div>
<div class="gh" style="top:565px"></div>
<div class="gh" style="top:581px;background:#e6e6e6"></div>
<!-- scrollbar -->
<div class="a" style="left:264px;top:587px;width:288px;height:16px;background:#f0f0f0"></div>
<div class="a" style="left:283px;top:587px;width:229px;height:16px;background:#cdcdcd"></div>
<svg class="a" style="left:267.5px;top:590px" width="10" height="9" viewBox="0 0 10 9"><path d="M7 1L2.8 4.5L7 8" fill="none" stroke="#3c3c3c" stroke-width="2.3"/></svg>
<svg class="a" style="left:538px;top:590px" width="10" height="9" viewBox="0 0 10 9"><path d="M3 1L7.2 4.5L3 8" fill="none" stroke="#3c3c3c" stroke-width="2.3"/></svg>
<!-- connection -->
<svg class="a" style="left:0;top:0" width="753" height="609" viewBox="0 0 753 609">
  <path d="M341 191 C430 191 430 297 519 297" fill="none" stroke="#3d9d4d" stroke-width="2"/>
  <path d="M428.4 242.1 L435.3 245.4 L431.6 245.9 L430.4 249.5Z" fill="#3d9d4d"/>
</svg>
<!-- node 1 -->
<div class="node" style="left:325px;top:133px;width:210px;height:95px;border:2px solid #8c8c8c;background:rgba(239,239,239,0.8)">
  <div class="nh" style="top:0;background:linear-gradient(to right,#007c00 0%,#007c00 50%,rgba(0,124,0,0.05) 100%);border-bottom:1px solid #000"><span class="a" style="left:6px;top:3px">Add Features</span></div>
</div>
<!-- node 2 -->
<div class="node" style="left:326px;top:262px;width:208px;height:72px;border:1px solid #000;background:rgba(239,239,239,0.8)">
  <div class="nh" style="top:0;background:linear-gradient(to right,#007c00 0%,#007c00 45%,rgba(0,124,0,0.05) 100%);border-bottom:1px solid #000"><span class="a" style="left:6px;top:3px;letter-spacing:-0.04px">Change Feature Attri...</span></div>
</div>
<!-- warnings -->
<svg class="a" style="left:510px;top:136px" width="18" height="18" viewBox="0 0 18 18"><path d="M9.4 1.6L16.6 16.3H2.2z" fill="rgba(255,255,255,0.75)" stroke="#9c2a1a" stroke-width="1.15" stroke-linejoin="round"/><path d="M9.4 5.2v6" stroke="#9c2a1a" stroke-width="1.7"/><circle cx="9.4" cy="14" r="1.05" fill="#9c2a1a"/></svg>
<svg class="a" style="left:510px;top:264px" width="18" height="18" viewBox="0 0 18 18"><path d="M9.4 1.6L16.6 16.3H2.2z" fill="rgba(255,255,255,0.75)" stroke="#9c2a1a" stroke-width="1.15" stroke-linejoin="round"/><path d="M9.4 5.2v6" stroke="#9c2a1a" stroke-width="1.7"/><circle cx="9.4" cy="14" r="1.05" fill="#9c2a1a"/></svg>
<!-- ports node1 -->
<svg class="a" style="left:0;top:0" width="753" height="609" viewBox="0 0 753 609">
  <path d="M335 163 h7 l5 6 l-5 6 h-7z" fill="none" stroke="#ff7a00" stroke-width="2"/>
  <circle cx="519" cy="169" r="6.9" fill="none" stroke="#2e8b3e" stroke-width="2"/>
  <circle cx="341" cy="191" r="7" fill="#66bb6a" stroke="#2e8b3e" stroke-width="2"/>
  <circle cx="341" cy="213" r="6.8" fill="none" stroke="#7a1a0a" stroke-width="2"/>
  <path d="M335 291 h7 l5 6 l-5 6 h-7z" fill="none" stroke="#ff7a00" stroke-width="2"/>
  <circle cx="519" cy="297" r="7" fill="#66bb6a" stroke="#2e8b3e" stroke-width="2"/>
  <circle cx="341" cy="319" r="6.8" fill="none" stroke="#7a1a0a" stroke-width="2"/>
</svg>
<span class="a pl" style="left:453px;top:163px">Feature(s)</span>
<span class="a pl" style="left:355px;top:185px">Feature(s)</span>
<span class="a pl" style="left:355px;top:207px">Feature(s)</span>
<span class="a pl" style="left:453px;top:291px">Feature(s)</span>
<span class="a pl" style="left:355px;top:313px">Feature(s)</span>


<!-- right panel -->
<div class="a hdr" style="left:561px;top:86px;width:191px"><span class="ht"><u>P</u>roperties</span>
  <svg class="a" style="left:161px;top:5px" width="10" height="10" viewBox="0 0 10 10"><path d="M2.5 3v-2.5h5v5h-1.5" fill="none" stroke="#000" stroke-width="1"/><path d="M2 1.5h6" stroke="#000" stroke-width="2"/><path d="M0.5 3.5h5v5h-5z" fill="none" stroke="#000" stroke-width="1"/><path d="M0 4.5h6" stroke="#000" stroke-width="2"/></svg>
  <svg class="a" style="left:176px;top:5px" width="10" height="10" viewBox="0 0 10 10"><path d="M1.5 1.5L8.5 8.5M8.5 1.5L1.5 8.5" stroke="#000" stroke-width="1.5"/></svg>
</div>
<div class="a filt" style="left:561px;top:108px;width:191px"><span>Filter by name</span></div>
<div class="a" style="left:561px;top:135px;width:191px;height:373px;background:#fff;border:1px solid #828790"></div>
<svg class="a" style="left:567px;top:140px" width="10" height="8" viewBox="0 0 10 8"><path d="M1 1.5l4 4l4-4" fill="none" stroke="#404040" stroke-width="1.4"/></svg>
<span class="a" style="left:585px;top:138px;font-weight:bold;letter-spacing:0.12px">Input</span>
<div class="a" style="left:582px;top:153px;width:169px;height:93px;background:#cce8ff"></div>
<span class="a" style="left:585px;top:194px;letter-spacing:-0.4px">Feature...</span>
<div class="a" style="left:640px;top:155px;width:80px;height:90px;border:1px solid #3a8a3a"></div>
<div class="a" style="left:641px;top:156px;width:55px;height:88px;background:#f0f0f0;border:1px solid #828282"></div>
<div class="a" style="left:696px;top:156px;width:23px;height:88px;background:#e4eef8"></div>
<div class="a" style="left:697px;top:157px;width:21px;height:20px;background:#d2d2d2;border:1px solid #c4c4c4;box-shadow:inset 1px 1px 0 #e0e0e0"></div>
<div class="a" style="left:697px;top:179px;width:21px;height:20px;background:#d2d2d2;border:1px solid #c4c4c4;box-shadow:inset 1px 1px 0 #e0e0e0"></div>
<div class="a" style="left:697px;top:201px;width:21px;height:20px;background:#d2d2d2;border:1px solid #c4c4c4;box-shadow:inset 1px 1px 0 #e0e0e0"></div>
<div class="a" style="left:697px;top:223px;width:21px;height:20px;background:#d2d2d2;border:1px solid #c4c4c4;box-shadow:inset 1px 1px 0 #e0e0e0"></div>
<svg class="a" style="left:697px;top:157px" width="21" height="86" viewBox="0 0 21 86">
  <path d="M10.5 4.5v12M4.5 10.5h12" stroke="#a4a4a4" stroke-width="2.6"/>
  <path d="M4.5 32.5h12" stroke="#8c8c8c" stroke-width="3"/>
  <path d="M4 57.5l6.5-6l6.5 6z" fill="#8e8e8e"/>
  <path d="M4 73l6.5 6l6.5-6z" fill="#8e8e8e"/>
</svg>
<div class="a" style="left:733px;top:196px;width:8px;height:8px;background:#6cc06c;border:1px solid #3a9a3a"></div>
<svg class="a" style="left:567px;top:251px" width="10" height="8" viewBox="0 0 10 8"><path d="M1 1.5l4 4l4-4" fill="none" stroke="#404040" stroke-width="1.4"/></svg>
<span class="a" style="left:585px;top:249px;font-weight:bold;letter-spacing:-0.45px">Options</span>

<span class="a" style="left:585px;top:271px;letter-spacing:-0.35px">Feature...</span>
<div class="a" style="left:640px;top:270px;width:13px;height:13px;background:#fff;border:1px solid #333"></div>
<div class="a" style="left:659px;top:266px;width:61px;height:21px;background:#cccccc;border:1px solid #c4c4c4"></div>
<svg class="a" style="left:705px;top:273px" width="10" height="6" viewBox="0 0 10 6"><path d="M1 1h8l-4 4z" fill="#a2a2a2"/><path d="M9 1l-4 4" stroke="#fafafa" stroke-width="1.2"/></svg>
<div class="a" style="left:733px;top:273px;width:8px;height:8px;background:#fff;border:1px solid #000"></div>

<span class="a" style="left:585px;top:297px;letter-spacing:-0.4px">Keep F...</span>
<div class="a" style="left:640px;top:296px;width:13px;height:13px;background:#fff;border:1px solid #333"></div>
<div class="a" style="left:733px;top:299px;width:8px;height:8px;background:#fff;border:1px solid #000"></div>

<span class="a" style="left:585px;top:323px;letter-spacing:-0.28px">Require...</span>
<div class="a" style="left:640px;top:322px;width:13px;height:13px;background:#fff;border:1px solid #333"></div>
<div class="a" style="left:733px;top:325px;width:8px;height:8px;background:#fff;border:1px solid #000"></div>

<span class="a" style="left:585px;top:349px">Map U...</span>
<div class="a" style="left:640px;top:348px;width:13px;height:13px;background:#fff;border:1px solid #333"></div>
<div class="a" style="left:659px;top:344px;width:61px;height:21px;background:#efefef;border:1px solid #d4d4d4;box-shadow:inset 0 0 0 1px #f6f6f6"></div>
<div class="a" style="left:733px;top:351px;width:8px;height:8px;background:#fff;border:1px solid #000"></div>

<span class="a" style="left:585px;top:375px">Map U...</span>
<div class="a" style="left:640px;top:374px;width:13px;height:13px;background:#fff;border:1px solid #333"></div>
<div class="a" style="left:659px;top:370px;width:61px;height:21px;background:#efefef;border:1px solid #d4d4d4;box-shadow:inset 0 0 0 1px #f6f6f6"></div>
<div class="a" style="left:733px;top:377px;width:8px;height:8px;background:#fff;border:1px solid #000"></div>

<!-- description -->
<div class="a" style="left:561px;top:513px;width:191px;height:95px;background:#f0f0f0;border:1px solid #828790"></div>
<div class="a" style="left:571px;top:524px;line-height:15px;white-space:nowrap">
<b style="letter-spacing:-0.25px">Feature(s)</b><br><span style="letter-spacing:-0.05px">Features in a supported format.</span><br><span style="letter-spacing:-0.37px">Shapefiles, GML, HOB, 000 (S-57</span><br><span style="letter-spacing:-0.12px">specification) and HPD database</span><br><span style="letter-spacing:-0.24px">URI are supported.</span>
</div>

</body></html>
